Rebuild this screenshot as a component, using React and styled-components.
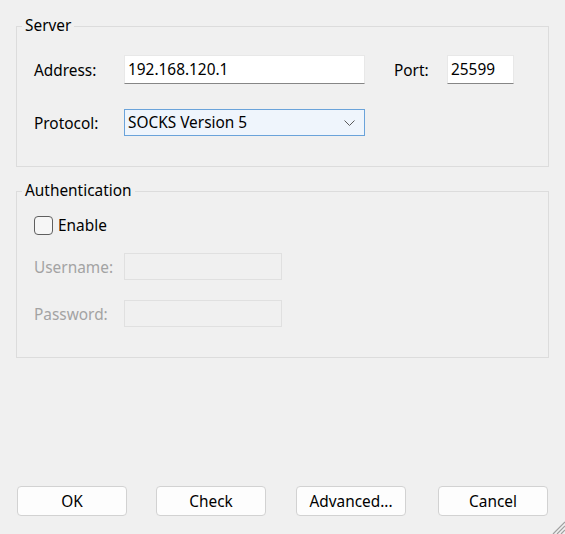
import React from 'react';
import styled, { createGlobalStyle } from 'styled-components';

const GlobalStyle = createGlobalStyle`
  html, body {
    margin: 0;
    padding: 0;
    background: #f0f0f0;
  }
  body {
    font-family: "Noto Sans", "Open Sans", sans-serif;
    font-size: 15.4px;
    color: #000;
    overflow: hidden;
  }
`;

const Dialog = styled.div`
  position: relative;
  box-sizing: border-box;
  height: 534px;
  padding: 16px 16px 18px 16px;
  display: flex;
  flex-direction: column;
`;

const Group = styled.fieldset`
  margin: 0 0 ${(p) => p.$gap || 0}px 0;
  border: 1px solid #dcdcdc;
  padding: ${(p) => p.$pad};
  min-width: 0;
  display: flex;
  flex-direction: column;
`;

const Legend = styled.legend`
  margin-left: -12px;
  padding: 0 3px;
  line-height: 20px;
  font-size: 15.4px;
`;

const Row = styled.div`
  display: flex;
  align-items: center;
  height: ${(p) => p.$h}px;
  margin-bottom: ${(p) => p.$mb || 0}px;
`;

const Label = styled.span`
  width: ${(p) => p.$w || 90}px;
  flex-shrink: 0;
  padding-top: 1px;
  color: ${(p) => (p.$disabled ? '#a3a3a3' : '#000')};
`;

const TextBox = styled.input`
  box-sizing: border-box;
  width: ${(p) => p.$w}px;
  height: 29px;
  margin: 0;
  padding: 0 3px 0 3px;
  font: inherit;
  color: #000;
  background: #fff;
  border: 1px solid #e8e8e8;
  border-bottom-color: #868686;
  outline: none;
`;

const DisabledBox = styled.div`
  box-sizing: border-box;
  width: 158px;
  height: 27px;
  background: #f0f0f0;
  border: 1px solid #e0e0e0;
`;

const Combo = styled.div`
  box-sizing: border-box;
  width: 241px;
  height: 27px;
  display: flex;
  align-items: center;
  justify-content: space-between;
  padding: 0 9px 0 3px;
  background: #eff5fc;
  border: 1px solid #6aa3da;
`;

const PortLabel = styled.span`
  margin-left: 29px;
  width: 53px;
  padding-top: 1px;
`;

const CheckBox = styled.span`
  box-sizing: border-box;
  width: 19px;
  height: 19px;
  border: 1px solid #5f5f5f;
  border-radius: 4px;
  background: #f6f6f6;
  margin-right: 5px;
`;

const Spacer = styled.div`
  flex: 1;
`;

const ButtonBar = styled.div`
  display: flex;
  padding-left: 1px;
  gap: 29px;
`;

const Button = styled.button`
  box-sizing: border-box;
  width: 110px;
  height: 30px;
  margin: 0 0 0 ${(p) => p.$shift || 0}px;
  padding: 1px 0 0 0;
  font: inherit;
  color: #000;
  background: #fdfdfd;
  border: 1px solid #d2d2d2;
  border-radius: 4px;
`;

const Grip = styled.svg`
  position: absolute;
  right: 0;
  bottom: 0;
`;

export default function App() {
  return (
    <>
      <GlobalStyle />
      <Dialog>
        <Group $pad="19px 16px 30px 17px" $gap={14}>
          <Legend>Server</Legend>
          <Row $h={29} $mb={25}>
            <Label>Address:</Label>
            <TextBox $w={241} defaultValue="192.168.120.1" />
            <PortLabel>Port:</PortLabel>
            <TextBox $w={67} defaultValue="25599" />
          </Row>
          <Row $h={27}>
            <Label>Protocol:</Label>
            <Combo>
              <span>SOCKS Version 5</span>
              <svg width="11" height="6" viewBox="0 0 11 6">
                <path d="M0.5 0.5 L5.5 5.5 L10.5 0.5" fill="none" stroke="#5a5a5a" strokeWidth="1" />
              </svg>
            </Combo>
          </Row>
        </Group>
        <Group $pad="15px 16px 30px 17px">
          <Legend>Authentication</Legend>
          <Row $h={19} $mb={18}>
            <CheckBox />
            <span>Enable</span>
          </Row>
          <Row $h={27} $mb={20}>
            <Label $disabled>Username:</Label>
            <DisabledBox />
          </Row>
          <Row $h={27}>
            <Label $disabled>Password:</Label>
            <DisabledBox />
          </Row>
        </Group>
        <Spacer />
        <ButtonBar>
          <Button>OK</Button>
          <Button>Check</Button>
          <Button $shift={1}>Advanced...</Button>
          <Button $shift={3}>Cancel</Button>
        </ButtonBar>
        <Grip width="16" height="16" viewBox="0 0 16 16">
          <path d="M16 4 L4 16 M16 8 L8 16 M16 12 L12 16" stroke="#a0a0a0" strokeWidth="1.2" fill="none" />
        </Grip>
      </Dialog>
    </>
  );
}
